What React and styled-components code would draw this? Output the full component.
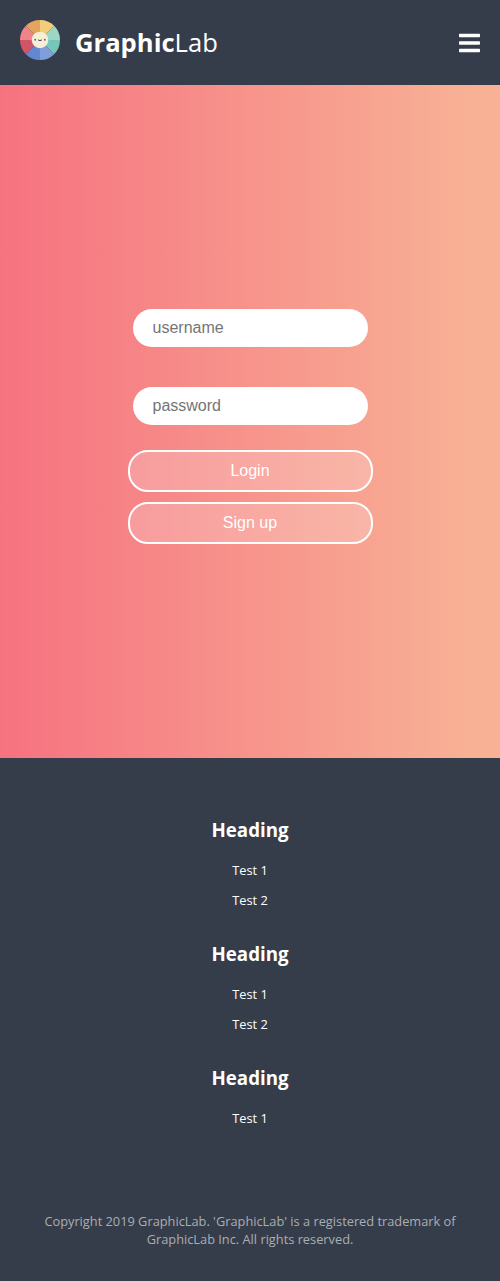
import React from "react";
import styled, { createGlobalStyle } from "styled-components";
import { FaBars } from "react-icons/fa";

const GlobalStyle = createGlobalStyle`
  *, *::before, *::after { box-sizing: border-box; }
  body {
    margin: 0;
    background: #363d4a;
    color: #fff;
    font-family: "Open Sans", sans-serif;
    font-size: 12.8px;
  }
`;

const Header = styled.header`
  display: flex;
  align-items: center;
  justify-content: space-between;
  height: 85px;
  padding: 0 20px;
  background: #363d4a;
`;

const Brand = styled.a`
  display: flex;
  align-items: flex-start;
  gap: 15px;
  height: 45px;
  color: #fff;
  text-decoration: none;
`;

const LogoMark = styled.svg`
  width: 40px;
  height: 40px;
`;

const BrandName = styled.span`
  font-size: 25.6px;
  line-height: 46px;
  font-weight: ${({ $bold }) => ($bold ? 700 : 400)};
`;

const MenuButton = styled.button`
  display: flex;
  padding: 1px 0 0;
  border: 0;
  background: none;
  color: #fff;
  font-size: 24px;
  cursor: pointer;

  svg { width: 21px; }
`;

const Main = styled.main`
  display: flex;
  align-items: center;
  justify-content: center;
  height: 673px;
  padding-top: 19px;
  background: linear-gradient(to right, #f67280, #f8b195 94%);
`;

const LoginForm = styled.form`
  display: flex;
  flex-direction: column;
  align-items: center;
  width: 245px;
`;

const Field = styled.input`
  width: 235px;
  height: 38px;
  margin-bottom: ${({ $gap }) => $gap}px;
  padding: 0 20px;
  border: 0;
  border-radius: 20px;
  outline: none;
  background: #fff;
  color: #333;
  font: 16px "Liberation Sans", Arial, sans-serif;

  &::placeholder { color: #757575; }
`;

const Button = styled.button`
  width: 245px;
  height: 42px;
  margin-bottom: 10px;
  padding: 0;
  border: 2px solid #fff;
  border-radius: 20px;
  background: rgba(255, 255, 255, 0.2);
  color: #fff;
  font: 16px "Liberation Sans", Arial, sans-serif;
  cursor: pointer;
`;

const Footer = styled.footer`
  height: 523px;
  padding: 58px 20px 0;
  background: #363d4a;
  text-align: center;
`;

const Column = styled.section`
  height: 124px;
`;

const Heading = styled.h3`
  margin: 0 0 12px;
  font-size: 18.72px;
  line-height: 27px;
  font-weight: 700;
`;

const LinkList = styled.ul`
  margin: 0;
  padding: 0;
  list-style: none;
`;

const LinkItem = styled.li`
  height: 30px;
  font-size: 12.8px;
  line-height: 30px;
`;

const Copyright = styled.p`
  margin: 24px 0 0;
  color: #aaadb3;
  font-size: 12.8px;
  line-height: 18px;
`;

const slices = [
  { fill: "#f0cf78", angle: 0 },
  { fill: "#9dd6c5", angle: 45 },
  { fill: "#75c8b9", angle: 90 },
  { fill: "#7f9edb", angle: 135 },
  { fill: "#6488cf", angle: 180 },
  { fill: "#d15566", angle: 225 },
  { fill: "#f08589", angle: 270 },
  { fill: "#e3a55e", angle: 315 },
];

const columns = [
  ["Test 1", "Test 2"],
  ["Test 1", "Test 2"],
  ["Test 1"],
];

function Logo() {
  return (
    <LogoMark viewBox="0 0 40 40" aria-hidden="true">
      {slices.map(({ fill, angle }) => (
        <path
          key={angle}
          d="M20 20V0A20 20 0 0 1 34.142 5.858Z"
          fill={fill}
          transform={`rotate(${angle} 20 20)`}
        />
      ))}
      <circle cx="20" cy="20" r="8.3" fill="#f7eed5" />
      <ellipse cx="15.2" cy="19.8" rx="0.75" ry="1" fill="#414952" />
      <ellipse cx="24.8" cy="19.8" rx="0.75" ry="1" fill="#414952" />
      <path d="M18.3 20.1Q20 21.4 21.7 20.1" fill="none" stroke="#414952" strokeWidth="1" strokeLinecap="round" />
    </LogoMark>
  );
}

export default function App() {
  return (
    <>
      <GlobalStyle />
      <Header>
        <Brand>
          <Logo />
          <BrandName $bold>
            Graphic<BrandName>Lab</BrandName>
          </BrandName>
        </Brand>
        <MenuButton aria-label="Menu">
          <FaBars />
        </MenuButton>
      </Header>
      <Main>
        <LoginForm onSubmit={(e) => e.preventDefault()}>
          <Field type="text" placeholder="username" $gap={40} />
          <Field type="password" placeholder="password" $gap={25} />
          <Button type="submit">Login</Button>
          <Button type="button">Sign up</Button>
        </LoginForm>
      </Main>
      <Footer>
        {columns.map((items, i) => (
          <Column key={i}>
            <Heading>Heading</Heading>
            <LinkList>
              {items.map((item) => (
                <LinkItem key={item}>{item}</LinkItem>
              ))}
            </LinkList>
          </Column>
        ))}
        <Copyright>
          Copyright 2019 GraphicLab. 'GraphicLab' is a registered trademark of GraphicLab Inc. All rights reserved.
        </Copyright>
      </Footer>
    </>
  );
}
